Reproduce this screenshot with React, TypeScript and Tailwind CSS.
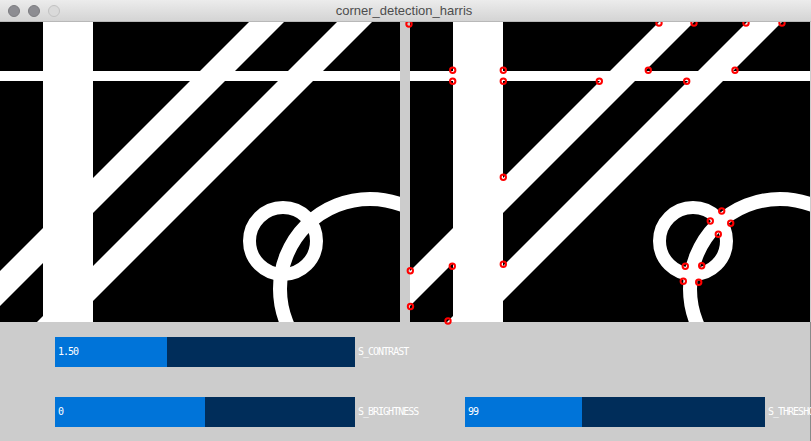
import React from "react";

const markers: [number, number][] = [
  [-1, 2],
  [249, 1], [284, 1], [336, 1], [372, 1],
  [42.7, 48.3], [93.3, 48.3], [238.3, 48.3], [325, 48.3],
  [42.7, 59.3], [93.3, 59.3], [189.3, 59.3], [276.7, 59.3],
  [93.3, 155.3], [93.3, 242.3], [42.3, 244.3],
  [0.3, 248.7], [0.5, 284.5], [38, 299],
  [311.7, 189], [300.3, 199], [320.7, 201.3], [308.3, 212.3],
  [275.3, 244.3], [291.7, 243.7], [273.3, 259.3], [288.7, 260.3],
];

function Scene({ showMarkers }: { showMarkers?: boolean }) {
  return (
    <svg
      width={400}
      height={300}
      viewBox="0 0 400 300"
      className="block shrink-0"
      style={{ overflow: "visible" }}
    >
      <defs>
        <clipPath id={showMarkers ? "clipR" : "clipL"}>
          <rect x={0} y={0} width={400} height={300} />
        </clipPath>
      </defs>
      <g clipPath={`url(#${showMarkers ? "clipR" : "clipL"})`}>
        <rect x={0} y={0} width={400} height={300} fill="#000" />
        <rect x={0} y={49} width={400} height={10} fill="#fff" />
        <polygon points="249,0 284,0 -16,300 -51,300" fill="#fff" />
        <polygon points="337,0 372,0 72,300 37,300" fill="#fff" />
        <rect x={43} y={0} width={50} height={300} fill="#fff" />
        <circle cx={283} cy={219} r={33.5} fill="none" stroke="#fff" strokeWidth={13} />
        <circle cx={370} cy={267} r={90} fill="none" stroke="#fff" strokeWidth={14} />
      </g>
      {showMarkers &&
        markers.map(([x, y], i) => (
          <circle
            key={i}
            cx={x}
            cy={y}
            r={2.7}
            fill="none"
            stroke="#ff0000"
            strokeWidth={2}
          />
        ))}
    </svg>
  );
}

function Slider({
  value,
  fill,
  label,
}: {
  value: string;
  fill: number;
  label: string;
}) {
  return (
    <div className="flex items-center h-[30px]">
      <div className="relative w-[300px] h-[30px] bg-[#002d5a] flex items-center shrink-0">
        <div className="absolute left-0 top-0 h-full bg-[#0074d9]" style={{ width: fill }} />
        <span className="relative pl-[3px] text-white text-[10px] leading-none tracking-[-1px] font-['DejaVu_Sans_Mono',monospace]">
          {value}
        </span>
      </div>
      <span className="pl-[3px] text-white text-[10px] leading-none tracking-[-1px] whitespace-nowrap font-['DejaVu_Sans_Mono',monospace]">
        {label}
      </span>
    </div>
  );
}

export default function App() {
  return (
    <div className="w-[811px] h-[441px] bg-[#cccccc] flex flex-col overflow-hidden">
      <div className="relative z-10 h-[22px] shrink-0 bg-gradient-to-b from-[#ececec] to-[#d4d4d4] border-b border-[#b8b8b8] flex items-center">
        <div className="flex items-center gap-[8px] pl-[8px]">
          <div className="w-[12px] h-[12px] rounded-full bg-[#8d8d92] border border-[#7c7c80]" />
          <div className="w-[12px] h-[12px] rounded-full bg-[#8d8d92] border border-[#7c7c80]" />
          <div className="w-[12px] h-[12px] rounded-full bg-[#dadada] border border-[#c2c2c2]" />
        </div>
        <div className="absolute inset-0 flex items-center justify-center">
          <span className="text-[13px] text-[#4d4d4d] font-['Liberation_Sans',Arial,sans-serif] ml-[-3px]">
            corner_detection_harris
          </span>
        </div>
      </div>
      <div className="flex h-[300px] shrink-0">
        <Scene />
        <div className="w-[10px] shrink-0" />
        <Scene showMarkers />
      </div>
      <div className="flex-1 flex flex-col pt-[15px] gap-[30px] pl-[55px] border-r border-[#8a8a8a]">
        <Slider value="1.50" fill={112} label="S_CONTRAST" />
        <div className="flex">
          <div className="w-[410px] shrink-0">
            <Slider value="0" fill={150} label="S_BRIGHTNESS" />
          </div>
          <Slider value="99" fill={117} label="S_THRESHOLD" />
        </div>
      </div>
    </div>
  );
}
